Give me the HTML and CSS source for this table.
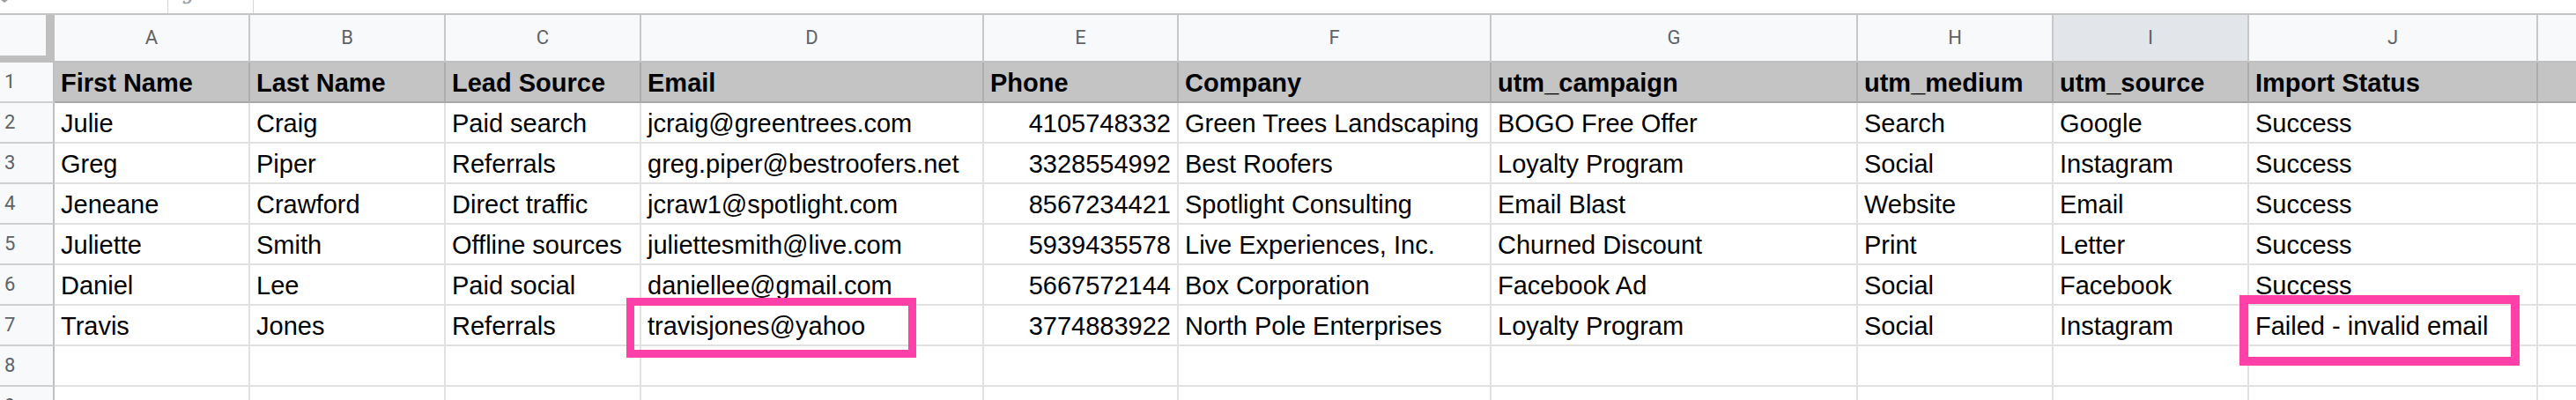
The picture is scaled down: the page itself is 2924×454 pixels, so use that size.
FILE: index.html
```html
<!DOCTYPE html>
<html>
<head>
<meta charset="utf-8">
<title>Import Status</title>
<link rel="stylesheet" href="styles.css">
</head>
<body>
<div class="topbar">
  <div class="namebox"><span class="caret"></span></div>
  <div class="fx"><span class="fx-glyph">ƒ</span></div>
  <div class="formula"></div>
</div>
<div class="sheet">
  <div class="grid">
    <div class="corner"></div>
    <div class="ch">A</div><div class="ch">B</div><div class="ch">C</div><div class="ch">D</div><div class="ch">E</div><div class="ch">F</div><div class="ch">G</div><div class="ch">H</div><div class="ch ch-sel">I</div><div class="ch">J</div><div class="ch ch-last"></div>

    <div class="rh">1</div>
    <div class="c hd">First Name</div><div class="c hd">Last Name</div><div class="c hd">Lead Source</div><div class="c hd">Email</div><div class="c hd">Phone</div><div class="c hd">Company</div><div class="c hd">utm_campaign</div><div class="c hd">utm_medium</div><div class="c hd">utm_source</div><div class="c hd">Import Status</div><div class="c hd last"></div>

    <div class="rh">2</div>
    <div class="c">Julie</div><div class="c">Craig</div><div class="c">Paid search</div><div class="c">jcraig@greentrees.com</div><div class="c num">4105748332</div><div class="c">Green Trees Landscaping</div><div class="c">BOGO Free Offer</div><div class="c">Search</div><div class="c">Google</div><div class="c">Success</div><div class="c last"></div>

    <div class="rh">3</div>
    <div class="c">Greg</div><div class="c">Piper</div><div class="c">Referrals</div><div class="c">greg.piper@bestroofers.net</div><div class="c num">3328554992</div><div class="c">Best Roofers</div><div class="c">Loyalty Program</div><div class="c">Social</div><div class="c">Instagram</div><div class="c">Success</div><div class="c last"></div>

    <div class="rh">4</div>
    <div class="c">Jeneane</div><div class="c">Crawford</div><div class="c">Direct traffic</div><div class="c">jcraw1@spotlight.com</div><div class="c num">8567234421</div><div class="c">Spotlight Consulting</div><div class="c">Email Blast</div><div class="c">Website</div><div class="c">Email</div><div class="c">Success</div><div class="c last"></div>

    <div class="rh">5</div>
    <div class="c">Juliette</div><div class="c">Smith</div><div class="c">Offline sources</div><div class="c">juliettesmith@live.com</div><div class="c num">5939435578</div><div class="c">Live Experiences, Inc.</div><div class="c">Churned Discount</div><div class="c">Print</div><div class="c">Letter</div><div class="c">Success</div><div class="c last"></div>

    <div class="rh">6</div>
    <div class="c">Daniel</div><div class="c">Lee</div><div class="c">Paid social</div><div class="c">daniellee@gmail.com</div><div class="c num">5667572144</div><div class="c">Box Corporation</div><div class="c">Facebook Ad</div><div class="c">Social</div><div class="c">Facebook</div><div class="c">Success</div><div class="c last"></div>

    <div class="rh">7</div>
    <div class="c">Travis</div><div class="c">Jones</div><div class="c">Referrals</div><div class="c">travisjones@yahoo</div><div class="c num">3774883922</div><div class="c">North Pole Enterprises</div><div class="c">Loyalty Program</div><div class="c">Social</div><div class="c">Instagram</div><div class="c">Failed - invalid email</div><div class="c last"></div>

    <div class="rh">8</div>
    <div class="c"></div><div class="c"></div><div class="c"></div><div class="c"></div><div class="c"></div><div class="c"></div><div class="c"></div><div class="c"></div><div class="c"></div><div class="c"></div><div class="c last"></div>

    <div class="rh">9</div>
    <div class="c"></div><div class="c"></div><div class="c"></div><div class="c"></div><div class="c"></div><div class="c"></div><div class="c"></div><div class="c"></div><div class="c"></div><div class="c"></div><div class="c last"></div>
  </div>
  <div class="mark mark-email"></div>
  <div class="mark mark-status"></div>
</div>
</body>
</html>
```

FILE: styles.css
```css
html, body {
  margin: 0;
  padding: 0;
  background: #ffffff;
  overflow: hidden;
  width: 2924px;
  height: 454px;
}

.topbar {
  display: flex;
  height: 15px;
  border-bottom: 2px solid #c4c4c4;
  overflow: hidden;
}

.namebox {
  width: 190px;
  border-right: 1px solid #d6d6d6;
  position: relative;
}

.caret {
  display: block;
  width: 0;
  height: 0;
  margin-left: 1px;
  border-left: 4px solid transparent;
  border-right: 4px solid transparent;
  border-top: 3px solid #9aa0a6;
}

.fx {
  width: 96px;
  border-right: 1px solid #d6d6d6;
  overflow: hidden;
}

.fx-glyph {
  display: block;
  margin-left: 22px;
  margin-top: -30px;
  font-family: "DejaVu Serif", serif;
  font-style: italic;
  font-size: 30px;
  line-height: 38px;
  color: #9aa0a6;
}

.formula {
  flex: 1;
}

.sheet {
  position: relative;
}

.grid {
  display: grid;
  grid-template-columns: 62px 222px 222px 222px 389px 221px 355px 416px 222px 222px 328px 1fr;
  grid-template-rows: 54px repeat(9, 46px);
}

.corner {
  box-sizing: border-box;
  background: #f8f9fa;
  border-right: 10px solid #bfbfbf;
  border-bottom: 8px solid #bfbfbf;
}

.ch {
  box-sizing: border-box;
  background: #f8f9fa;
  border-right: 2px solid #c8c8c8;
  border-bottom: 2px solid #c0c0c0;
  text-align: center;
  font-family: Roboto, "Liberation Sans", sans-serif;
  font-size: 22px;
  line-height: 52px;
  color: #5f6368;
}

.ch-sel {
  background: #e2e5e9;
}

.ch-last {
  border-right: none;
}

.rh {
  box-sizing: border-box;
  background: #f8f9fa;
  border-right: 2px solid #c0c0c0;
  border-bottom: 2px solid #cfcfcf;
  padding-left: 5px;
  font-family: Roboto, "Liberation Sans", sans-serif;
  font-size: 22px;
  line-height: 44px;
  color: #5f6368;
}

.c {
  box-sizing: border-box;
  border-right: 2px solid #e1e1e1;
  border-bottom: 2px solid #e1e1e1;
  padding: 2px 7px 0 7px;
  font-family: "Liberation Sans", Arial, sans-serif;
  font-size: 29px;
  line-height: 42px;
  color: #000000;
  white-space: nowrap;
  overflow: hidden;
}

.c.hd {
  background: #c4c4c4;
  font-weight: bold;
  border-right-color: #adadad;
  border-bottom-color: #a8a8a8;
}

.c.num {
  text-align: right;
  padding-right: 7px;
}

.c.last {
  border-right: none;
}

.mark {
  position: absolute;
  box-sizing: border-box;
  border-style: solid;
  border-color: #ff40a9;
}

.mark-email {
  left: 711px;
  top: 321px;
  width: 329px;
  height: 68px;
  border-width: 9px;
}

.mark-status {
  left: 2542px;
  top: 318px;
  width: 318px;
  height: 80px;
  border-width: 10px;
}
```
